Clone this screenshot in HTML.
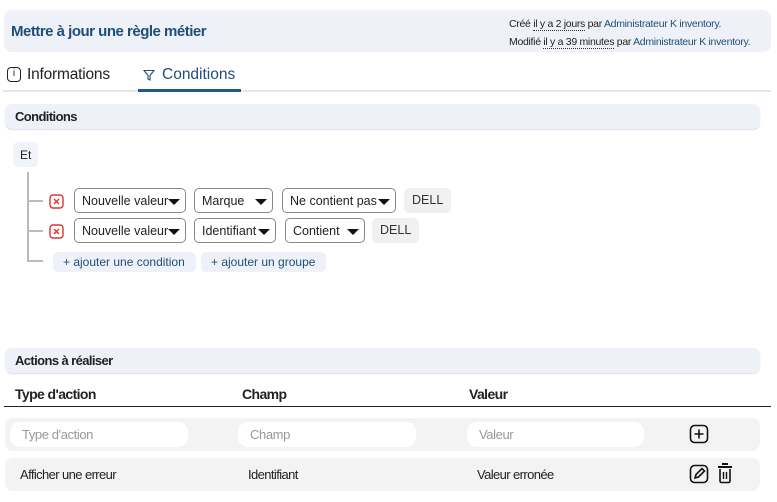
<!DOCTYPE html>
<html><head><meta charset="utf-8"><style>
*{box-sizing:border-box;margin:0;padding:0}
body{width:777px;height:502px;background:#fff;font-family:"Liberation Sans",sans-serif;color:#222;position:relative;overflow:hidden}
.a{position:absolute}
.hdr{left:4px;top:10px;width:767px;height:42px;background:#eef2f8;border-radius:8px}
.cond{letter-spacing:-0.6px}
.sec{left:5px;width:755px;height:25px;background:#eef2f8;border-radius:7px;font-size:13px;font-weight:bold;padding:5px 10px;box-shadow:0 1px 1px #dde}
.sel{height:25px;border:1px solid #888;border-radius:5px;font-size:12.5px;padding:5px 7px;background:#fff;white-space:nowrap}
.sel:after{content:"";position:absolute;right:5px;top:10px;border-left:6px solid transparent;border-right:6px solid transparent;border-top:6px solid #111}
.dell{height:25px;background:#f0f0f0;border-radius:5px;font-size:12.5px;padding:5px 8px;color:#333}
.btn{top:252px;height:20px;background:#eef2f8;border-radius:5px;font-size:12px;color:#1f4e7a;padding:3px 10px;white-space:nowrap}
.ln{background:#bbb}
.row{left:5px;width:755px;height:33px;background:#f3f3f3;border-radius:8px}
.inp{top:422px;height:25px;background:#fff;border-radius:10px;font-size:13px;color:#999;padding:5px 12px;letter-spacing:-0.4px}
</style></head><body>
<div class="a hdr"></div>
<div class="a cond" style="left:11px;top:23px;font-size:15px;font-weight:bold;color:#1f4e7a;letter-spacing:-0.5px">Mettre à jour une règle métier</div>
<div class="a" style="left:509px;top:15px;font-size:10.5px;letter-spacing:-0.3px;line-height:18px;color:#222;white-space:nowrap">Créé <span style="border-bottom:1px dotted #333">il y a 2 jours</span> par <span style="color:#1f4e7a">Administrateur K inventory.</span><br>Modifié <span style="border-bottom:1px dotted #333">il y a 39 minutes</span> par <span style="color:#1f4e7a">Administrateur K inventory.</span></div>
<div class="a" style="left:7px;top:67px;width:14px;height:15px;border:1.5px solid #222;border-radius:4px;font-size:10px;text-align:center;line-height:12px">i</div>
<div class="a" style="left:27px;top:66px;font-size:15.5px;letter-spacing:-0.2px">Informations</div>
<svg class="a" style="left:143px;top:69px" width="12" height="12" viewBox="0 0 12 12"><path d="M1 1.5h10L7 6.5v4.5L5 10V6.5z" fill="none" stroke="#1f4e7a" stroke-width="1.1"/></svg>
<div class="a" style="left:162px;top:66px;font-size:15.5px;color:#1f4e7a">Conditions</div>
<div class="a" style="left:3px;top:90px;width:768px;height:2px;background:#e6e6e6"></div>
<div class="a" style="left:138px;top:89px;width:103px;height:3px;background:#1f5a8a"></div>
<div class="a sec cond" style="top:104px">Conditions</div>
<div class="a" style="left:13px;top:142px;width:25px;height:25px;background:#f0f3f7;border-radius:5px;font-size:12px;padding:6px 7px">Et</div>
<div class="a ln" style="left:27px;top:172px;width:2px;height:90px"></div>
<div class="a ln" style="left:27px;top:200px;width:16px;height:2px"></div>
<div class="a ln" style="left:27px;top:230px;width:16px;height:2px"></div>
<div class="a ln" style="left:27px;top:260px;width:16px;height:2px"></div>
<svg class="a" style="left:49px;top:194px" width="15" height="15" viewBox="0 0 15 15"><rect x="1" y="1" width="13" height="13" rx="3" fill="none" stroke="#d33" stroke-width="1.4"/><path d="M5 5l5 5M10 5l-5 5" stroke="#d33" stroke-width="1.4"/></svg>
<svg class="a" style="left:49px;top:224px" width="15" height="15" viewBox="0 0 15 15"><rect x="1" y="1" width="13" height="13" rx="3" fill="none" stroke="#d33" stroke-width="1.4"/><path d="M5 5l5 5M10 5l-5 5" stroke="#d33" stroke-width="1.4"/></svg>
<div class="a sel" style="left:74px;top:188px;width:112px">Nouvelle valeur</div>
<div class="a sel" style="left:194px;top:188px;width:79px">Marque</div>
<div class="a sel" style="left:282px;top:188px;width:114px">Ne contient pas</div>
<div class="a dell" style="left:404px;top:188px">DELL</div>
<div class="a sel" style="left:74px;top:218px;width:112px">Nouvelle valeur</div>
<div class="a sel" style="left:194px;top:218px;width:82px">Identifiant</div>
<div class="a sel" style="left:285px;top:218px;width:80px">Contient</div>
<div class="a dell" style="left:372px;top:218px">DELL</div>
<div class="a btn" style="left:53px;width:143px">+ ajouter une condition</div>
<div class="a btn" style="left:201px;width:125px">+ ajouter un groupe</div>
<div class="a sec cond" style="top:348px">Actions à réaliser</div>
<div class="a cond" style="left:15px;top:386px;font-size:14px;font-weight:bold">Type d'action</div>
<div class="a cond" style="left:242px;top:386px;font-size:14px;font-weight:bold">Champ</div>
<div class="a cond" style="left:469px;top:386px;font-size:14px;font-weight:bold">Valeur</div>
<div class="a" style="left:4px;top:406px;width:767px;height:1px;background:#222"></div>
<div class="a row" style="top:418px"></div>
<div class="a inp" style="left:10px;width:178px">Type d'action</div>
<div class="a inp" style="left:238px;width:178px">Champ</div>
<div class="a inp" style="left:467px;width:177px">Valeur</div>
<svg class="a" style="left:689px;top:424px" width="20" height="20" viewBox="0 0 20 20"><rect x="1.5" y="1.5" width="17" height="17" rx="4" fill="none" stroke="#111" stroke-width="1.6"/><path d="M10 5.5v9M5.5 10h9" stroke="#111" stroke-width="1.6"/></svg>
<div class="a row" style="top:458px"></div>
<div class="a cond" style="left:20px;top:467px;font-size:13px">Afficher une erreur</div>
<div class="a cond" style="left:248px;top:467px;font-size:13px">Identifiant</div>
<div class="a cond" style="left:477px;top:467px;font-size:13px">Valeur erronée</div>
<svg class="a" style="left:689px;top:464px" width="20" height="20" viewBox="0 0 20 20"><rect x="1.5" y="1.5" width="17" height="17" rx="4" fill="none" stroke="#111" stroke-width="1.6"/><path d="M6 14l1-3.5 6-6 2.5 2.5-6 6z" fill="none" stroke="#111" stroke-width="1.6"/></svg>
<svg class="a" style="left:716px;top:462px" width="18" height="22" viewBox="0 0 18 22"><path d="M6 2h6M2 5h14" stroke="#111" stroke-width="2"/><path d="M4 7v12a1.5 1.5 0 0 0 1.5 1.5h7A1.5 1.5 0 0 0 14 19V7" fill="none" stroke="#111" stroke-width="1.6"/><path d="M7.5 10v7M10.5 10v7" stroke="#111" stroke-width="1.4"/></svg>
</body></html>
